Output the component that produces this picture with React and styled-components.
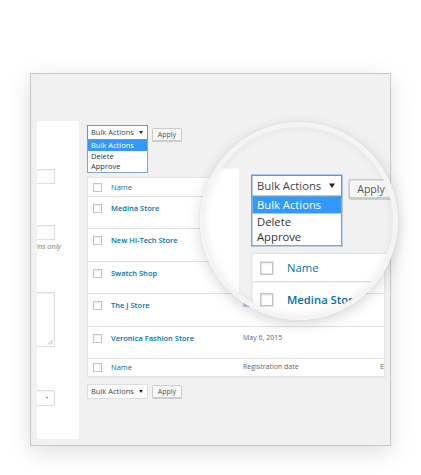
import React from 'react';
import styled, { createGlobalStyle } from 'styled-components';

const GlobalStyle = createGlobalStyle`
  html, body {
    margin: 0;
    background: #ffffff;
  }
  #root {
    width: 421px;
    height: 475px;
    overflow: hidden;
  }
`;

const stores = [
  'Medina Store',
  'New Hi-Tech Store',
  'Swatch Shop',
  'The J Store',
  'Veronica Fashion Store',
];

const Stage = styled.div`
  position: relative;
  width: 421px;
  height: 475px;
  padding: 73px 0 0 30px;
  box-sizing: border-box;
  font-family: "Open Sans", "Liberation Sans", sans-serif;
`;

const Frame = styled.div`
  width: 361px;
  height: 373px;
  box-sizing: border-box;
  border: 1px solid #c6c6c6;
  background: #f1f1f1;
  box-shadow: 0 6px 22px rgba(0, 0, 0, 0.13);
  overflow: hidden;
`;

const ScreenWrap = styled.div`
  width: 359px;
  height: 371px;
  box-sizing: border-box;
  display: flex;
  align-items: flex-start;
  gap: 8px;
  padding: 47px 0 0 6px;
  background: #f1f1f1;
  font-family: "Open Sans", "Liberation Sans", sans-serif;
`;

const Sidebar = styled.div`
  flex-shrink: 0;
  width: 42px;
  height: 318px;
  box-sizing: border-box;
  padding: 48px 24px 0 0;
  background: #ffffff;
  display: flex;
  flex-direction: column;
  overflow: hidden;
`;

const Field = styled.div`
  height: ${p => p.$h}px;
  margin: ${p => p.$top}px 0 0 -12px;
  box-sizing: border-box;
  border: 1px solid #dddddd;
  border-radius: ${p => (p.$round ? 2 : 0)}px;
  background: #ffffff;
  box-shadow: inset 0 1px 2px rgba(0, 0, 0, 0.06);
  position: relative;
  flex-shrink: 0;
`;

const Grip = styled.svg`
  position: absolute;
  right: 1px;
  bottom: 1px;
`;

const SmallArrow = styled.span`
  position: absolute;
  right: 6px;
  top: 6px;
  border-left: 1.5px solid transparent;
  border-right: 1.5px solid transparent;
  border-top: 2px solid #777;
`;

const Note = styled.div`
  display: flex;
  justify-content: flex-end;
  margin: 1px -6px 0 0;
  height: 10px;
  font-size: 7.4px;
  line-height: 10px;
  font-style: italic;
  color: #777;
  white-space: nowrap;
`;

const Main = styled.div`
  flex-shrink: 0;
  width: 298px;
  padding-top: 4px;
  display: flex;
  flex-direction: column;
`;

const Actions = styled.div`
  display: flex;
  align-items: ${p => (p.$bottom ? 'center' : 'flex-end')};
  gap: 4px;
  height: 15px;
  margin-top: ${p => (p.$bottom ? 7 : 0)}px;
`;

const SelectWrap = styled.div`
  position: relative;
`;

const SelectBox = styled.div`
  width: 61px;
  height: 15px;
  box-sizing: border-box;
  border: 1px solid ${p => (p.$focused ? '#5b9dd9' : '#dddddd')};
  background: #ffffff;
  padding-left: 3px;
  font-size: 7.5px;
  line-height: 13px;
  color: #444;
  position: relative;
`;

const Arrow = styled.span`
  position: absolute;
  right: 4px;
  top: 5px;
  border-left: 2px solid transparent;
  border-right: 2px solid transparent;
  border-top: 3px solid #222;
`;

const Dropdown = styled.div`
  position: absolute;
  left: 0;
  top: 15px;
  width: 61px;
  box-sizing: border-box;
  border: 1px solid #7fa6cc;
  border-top: none;
  background: #ffffff;
  z-index: 2;
`;

const Option = styled.div`
  height: 10.6px;
  padding-left: 3px;
  font-size: 7.5px;
  line-height: 10.6px;
  color: ${p => (p.$active ? '#ffffff' : '#333')};
  background: ${p => (p.$active ? '#3399ff' : 'transparent')};
`;

const ApplyButton = styled.div`
  width: 30px;
  height: 13px;
  box-sizing: border-box;
  margin-bottom: ${p => (p.$bottom ? 0 : -1)}px;
  border: 1px solid #cccccc;
  border-radius: 1.5px;
  background: #f7f7f7;
  box-shadow: 0 1px 0 #cccccc;
  font-size: 7px;
  line-height: 11px;
  text-align: center;
  color: #555;
`;

const Table = styled.div`
  margin-top: 37px;
  width: 298px;
  box-sizing: border-box;
  border: 1px solid #e5e5e5;
  background: #ffffff;
  box-shadow: 0 1px 1px rgba(0, 0, 0, 0.04);
  overflow: hidden;
`;

const Row = styled.div`
  display: grid;
  grid-template-columns: 18px 132px 137px 120px;
  align-items: ${p => (p.$head ? 'center' : 'start')};
  height: ${p => (p.$head ? '18px' : '32.4px')};
  box-sizing: border-box;
  padding: ${p => (p.$head ? '0 0 0 5px' : '6px 0 0 5px')};
  border-top: ${p => (p.$first ? 'none' : '1px solid #e1e1e1')};
  white-space: nowrap;
`;

const Check = styled.span`
  display: block;
  width: 9px;
  height: 9px;
  box-sizing: border-box;
  margin-top: ${p => (p.$head ? 0 : 1)}px;
  border: 1px solid #c3c6c9;
  background: #ffffff;
  box-shadow: inset 0 1px 1px rgba(0, 0, 0, 0.06);
`;

const NameLink = styled.span`
  font-size: 7.5px;
  line-height: 10px;
  font-weight: ${p => (p.$bold ? 600 : 400)};
  color: #0073aa;
`;

const Cell = styled.span`
  font-size: 7px;
  line-height: 10px;
  color: #666;
`;

const Lens = styled.div`
  position: absolute;
  left: 200px;
  top: 122px;
  width: 198px;
  height: 198px;
  box-sizing: border-box;
  border: 5px solid #f4f4f4;
  border-radius: 50%;
  overflow: hidden;
  box-shadow: 0 4px 14px rgba(0, 0, 0, 0.16), 0 0 2px rgba(0, 0, 0, 0.08);
  z-index: 5;

  &::after {
    content: '';
    position: absolute;
    inset: 0;
    border-radius: 50%;
    box-shadow: inset 0 0 8px rgba(0, 0, 0, 0.07);
  }
`;

const LensView = styled.div`
  position: absolute;
  left: -38px;
  top: -29.5px;
  transform: scale(1.5);
  transform-origin: 0 0;
`;

const BulkActions = ({ open, bottom }) => (
  <Actions $bottom={bottom}>
    <SelectWrap>
      <SelectBox $focused={open}>
        Bulk Actions
        <Arrow />
      </SelectBox>
      {open && (
        <Dropdown>
          <Option $active>Bulk Actions</Option>
          <Option>Delete</Option>
          <Option>Approve</Option>
        </Dropdown>
      )}
    </SelectWrap>
    <ApplyButton $bottom={bottom}>Apply</ApplyButton>
  </Actions>
);

const HeadRow = ({ first }) => (
  <Row $head $first={first}>
    <Check $head />
    <NameLink>Name</NameLink>
    <Cell>Registration date</Cell>
    <Cell>Email</Cell>
  </Row>
);

const Screen = () => (
  <ScreenWrap>
    <Sidebar>
      <Field $h={15} $top={0} />
      <Field $h={15} $top={41} />
      <Note>Visible to admins only</Note>
      <Field $h={55} $top={41}>
        <Grip width="6" height="6" viewBox="0 0 6 6">
          <path d="M1 5.5L5.5 1M3.5 5.5L5.5 3.5" stroke="#999" strokeWidth="0.8" fill="none" />
        </Grip>
      </Field>
      <Field $h={16} $top={43} $round>
        <SmallArrow />
      </Field>
    </Sidebar>
    <Main>
      <BulkActions open />
      <Table>
        <HeadRow first />
        {stores.map(name => (
          <Row key={name}>
            <Check />
            <NameLink $bold>{name}</NameLink>
            <Cell>May 6, 2015</Cell>
            <Cell />
          </Row>
        ))}
        <HeadRow />
      </Table>
      <BulkActions bottom />
    </Main>
  </ScreenWrap>
);

const App = () => (
  <>
    <GlobalStyle />
    <Stage>
      <Frame>
        <Screen />
      </Frame>
      <Lens>
        <LensView>
          <Screen />
        </LensView>
      </Lens>
    </Stage>
  </>
);

export default App;
